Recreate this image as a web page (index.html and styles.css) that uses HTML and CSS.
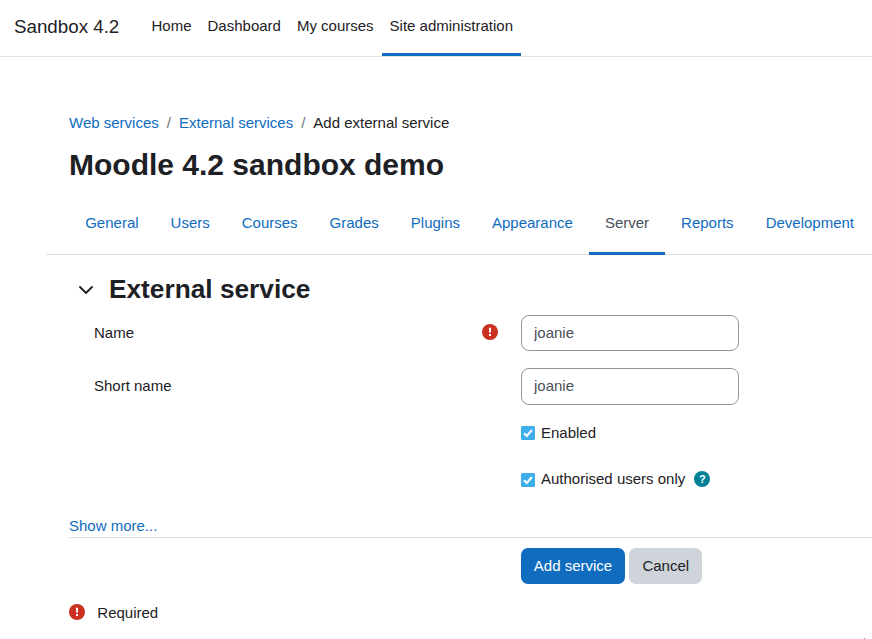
FILE: index.html
```html
<!DOCTYPE html>
<html lang="en">
<head>
<meta charset="utf-8">
<title>Add external service</title>
<link rel="stylesheet" href="styles.css">
</head>
<body>
<header class="navbar">
  <a class="brand">Sandbox 4.2</a>
  <nav class="primary">
    <a>Home</a><a>Dashboard</a><a>My courses</a><a class="active">Site administration</a>
  </nav>
</header>
<main>
  <nav class="breadcrumb"><a>Web services</a><i>/</i><a>External services</a><i>/</i><span>Add external service</span></nav>
  <h1>Moodle 4.2 sandbox demo</h1>
  <nav class="tabs">
    <a>General</a><a>Users</a><a>Courses</a><a>Grades</a><a>Plugins</a><a>Appearance</a><a class="active">Server</a><a>Reports</a><a>Development</a>
  </nav>
  <form>
    <div class="section">
      <svg class="chevron" viewBox="0 0 16 10"><path d="M2 2 8 8l6-6"/></svg>
      <h2>External service</h2>
    </div>
    <div class="row">
      <label for="name">Name</label>
      <svg class="badge" viewBox="0 0 16 16"><circle cx="8" cy="8" r="8"/><path d="M6.900 3.800h2.200l-.3 5H7.200zM7 10h2v2H7z"/></svg>
      <input id="name" type="text" value="joanie">
    </div>
    <div class="row second">
      <label for="short">Short name</label>
      <span></span>
      <input id="short" type="text" value="joanie">
    </div>
    <div class="check enabled">
      <svg class="box" viewBox="0 0 14 14"><rect width="14" height="14" rx="1.500"/><path d="M3 7.200 5.800 10 11 4"/></svg>
      <span>Enabled</span>
    </div>
    <div class="check authorised">
      <svg class="box" viewBox="0 0 14 14"><rect width="14" height="14" rx="1.500"/><path d="M3 7.200 5.800 10 11 4"/></svg>
      <span>Authorised users only</span>
      <span class="help">?</span>
    </div>
    <div class="more"><a>Show more...</a></div>
    <div class="actions"><button type="button" class="add">Add service</button><button type="button" class="cancel">Cancel</button></div>
    <div class="required">
      <svg class="badge" viewBox="0 0 16 16"><circle cx="8" cy="8" r="8"/><path d="M6.900 3.800h2.200l-.3 5H7.200zM7 10h2v2H7z"/></svg>
      <span>Required</span>
    </div>
  </form>
</main>
<span class="speck"></span>
</body>
</html>
```
FILE: styles.css
```css
* { box-sizing: border-box; }
body { position: relative; margin: 0; height: 639px; overflow: hidden; background: #fff; color: #1d2125; font: 15px/22px "Liberation Sans", Arial, sans-serif; }
a { color: #0f6cbf; white-space: nowrap; }
h1, h2 { margin: 0; font-weight: 700; }
.navbar { display: flex; height: 57px; border-bottom: 1px solid #dee2e6; padding-left: 14px; }
.brand { width: 129.500px; padding-top: 15px; color: #1d2125; font-size: 18.75px; line-height: 24px; }
.primary { display: flex; }
.primary a { height: 56px; padding: 15px 8px 0; color: #1d2125; }
.primary .active { border-bottom: 3px solid #0f6cbf; }
main { padding: 55px 0 0 69px; }
.breadcrumb { display: flex; height: 22px; white-space: nowrap; }
.breadcrumb i { width: 20.200px; padding-left: 8px; color: #6a737b; font-style: normal; }
h1 { margin-top: 13px; font-size: 30px; line-height: 36px; }
.tabs { display: flex; height: 72px; margin-left: -23px; padding-left: 23.200px; border-bottom: 1px solid #dee2e6; }
.tabs a { height: 72px; padding: 29px 16px 0; }
.tabs .active { border-bottom: 3px solid #0f6cbf; color: #495057; }
.section { display: flex; align-items: center; height: 36px; margin-top: 16px; padding-left: 9px; }
.chevron { width: 16px; height: 10px; margin: 2px 15px 0 0; fill: none; stroke: #1d2125; stroke-width: 1.900; stroke-linecap: round; stroke-linejoin: round; }
h2 { font-size: 26.25px; line-height: 32px; }
.row { display: grid; grid-template-columns: 388px 39px 218px; align-items: center; height: 36px; margin-top: 8px; padding-left: 25px; }
.row .badge { margin-bottom: 2px; }
.second { margin-top: 17px; height: 37px; }
.second label { padding-bottom: 2px; }
input { width: 218px; height: 100%; padding: 0 12px 2px; border: 1px solid #8f959e; border-radius: 8px; color: #495057; background: #fff; font: inherit; }
.badge { display: block; width: 16px; height: 16px; fill: #fff; }
.badge circle { fill: #ca3120; }
.check { display: flex; align-items: center; height: 22px; margin: 24px 0 0 452px; }
.enabled { margin-top: 17px; }
.box { width: 14px; height: 14px; margin-right: 6px; fill: #3daee9; }
.authorised .box { margin-top: 2px; }
.box path { fill: none; stroke: #fff; stroke-width: 2; }
.help { width: 16px; height: 16px; margin-left: 9px; border-radius: 50%; background: #008196; color: #fff; font-size: 11px; font-weight: 700; line-height: 16px; text-align: center; }
.more { height: 23px; margin-top: 25px; border-bottom: 1px solid #dee2e6; }
.actions { display: flex; gap: 4px; margin: 10px 0 0 452px; }
button { height: 36px; padding: 0; border: 0; border-radius: 7px; font: inherit; }
.add { width: 104px; background: #0f6cbf; color: #fff; }
.cancel { width: 73px; padding-left: .5px; background: #ced4da; color: #1d2125; }
.required { display: flex; align-items: center; gap: 12.300px; height: 22px; margin-top: 18px; }
.required .badge { margin-bottom: 2px; }
.speck { position: absolute; right: 7px; bottom: 0; width: 1px; height: 1px; background: #8f959e; }
```
